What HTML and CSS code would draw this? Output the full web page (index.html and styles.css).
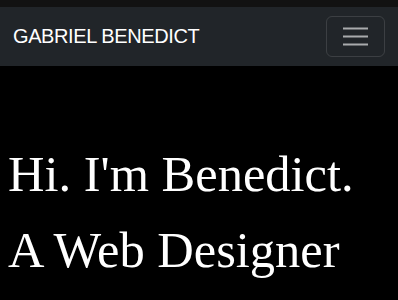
FILE: index.html
```html
<!DOCTYPE html>
<html>
<head>
<meta charset="utf-8">
<link rel="stylesheet" href="styles.css">
</head>
<body>
<div class="topstrip"></div>
<nav class="navbar">
  <span class="brand">GABRIEL BENEDICT</span>
  <button class="toggler" aria-label="menu">
    <svg width="25" height="19" viewBox="0 0 25 19"><path d="M0 1.5H25M0 9.5H25M0 17.5H25" stroke="#a9abad" stroke-width="2"/></svg>
  </button>
</nav>
<main class="hero">
  <h1 class="title">Hi. I'm Benedict.<br>A Web Designer</h1>
</main>
</body>
</html>
```
FILE: styles.css
```css
html, body { margin: 0; padding: 0; background: #000; }
body { font-family: "Liberation Sans", Arial, sans-serif; }
.topstrip { height: 7px; background: #121212; }
.navbar {
  height: 59px;
  background: #212529;
  display: flex;
  align-items: center;
  justify-content: space-between;
  padding: 0 13px 0 13px;
  box-sizing: border-box;
}
.brand { color: #fff; font-size: 20px; letter-spacing: -0.4px; }
.toggler {
  width: 59px; height: 41px;
  background: transparent;
  border: 1px solid rgba(255,255,255,0.12);
  border-radius: 6px;
  display: flex; align-items: center; justify-content: center;
  padding: 0;
}
.toggler svg { display: block; }
.hero { padding: 0 8px; }
.title {
  margin: 0;
  padding-top: 70px;
  color: #fff;
  font-family: "Liberation Serif", "Times New Roman", serif;
  font-weight: normal;
  font-size: 50.5px;
  line-height: 76px;
}
```
